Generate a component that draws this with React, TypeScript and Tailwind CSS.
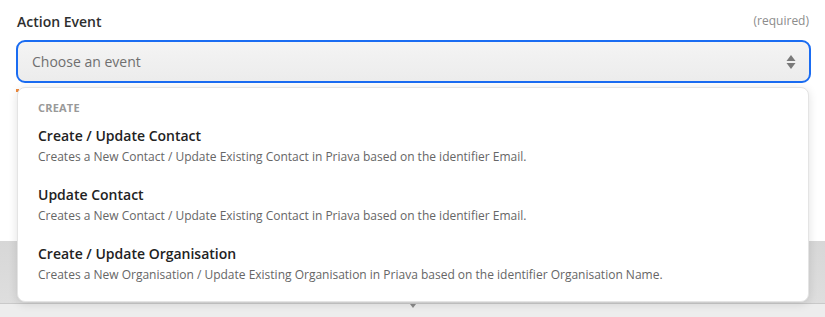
import React from "react";

const items = [
  {
    title: "Create / Update Contact",
    desc: "Creates a New Contact / Update Existing Contact in Priava based on the identifier Email.",
  },
  {
    title: "Update Contact",
    desc: "Creates a New Contact / Update Existing Contact in Priava based on the identifier Email.",
  },
  {
    title: "Create / Update Organisation",
    desc: "Creates a New Organisation / Update Existing Organisation in Priava based on the identifier Organisation Name.",
  },
];

export default function App() {
  return (
    <div
      className="relative w-[825px] h-[317px] overflow-hidden bg-white"
      style={{ fontFamily: "'Open Sans', 'Noto Sans', sans-serif" }}
    >
      <div className="h-[241px] bg-white px-[16px] pt-[9px]">
        <div className="flex items-center justify-between pl-[1px] h-[24px]">
          <span className="text-[14px] font-semibold text-[#2d2e2e]">Action Event</span>
          <span className="text-[12px] text-[#8c8c8c]">(required)</span>
        </div>
        <div className="mt-[7px] mr-[-2px] h-[43px] rounded-[9px] border-2 border-[#1a6cf2] bg-gradient-to-b from-[#f4f4f4] to-[#ececec] flex items-center justify-between pl-[14px] pr-[13px]">
          <span className="text-[14px] text-[#6f6f6f]">Choose an event</span>
          <svg width="10" height="16" viewBox="0 0 10 16">
            <path d="M5 1 L9.5 7 L0.5 7 Z" fill="#7a7a7a" />
            <path d="M5 15 L9.5 9 L0.5 9 Z" fill="#7a7a7a" />
          </svg>
        </div>
        <div className="mt-[6px] h-[3px] w-[3px] bg-[#f08a3c]" />
      </div>
      <div className="h-[63px] bg-gradient-to-b from-[#d7d7d7] to-[#dedede] border-b border-[#c9c9c9]" />
      <div className="h-[13px] bg-[#ededed] relative">
        <div className="absolute left-[410px] top-0 w-0 h-0 border-l-[3px] border-r-[3px] border-t-[4px] border-l-transparent border-r-transparent border-t-[#8a8a8a]" />
      </div>

      <div className="absolute left-[17px] top-[87px] w-[792px] h-[215px] bg-white rounded-[8px] border border-[#e4e4e4] shadow-[0_2px_10px_rgba(0,0,0,0.12)] pl-[20px] pt-[12px]">
        <div className="text-[11px] font-bold text-[#999999] tracking-[0.2px] leading-[16px]">CREATE</div>
        <div className="flex flex-col">
          {items.map((it, i) => (
            <div key={i} className="h-[59px] shrink-0 pt-[10px]">
              <div className="text-[14px] font-semibold text-[#222222] leading-[20px]">{it.title}</div>
              <div className="text-[12px] text-[#666666] leading-[17px] mt-[2px]">{it.desc}</div>
            </div>
          ))}
        </div>
      </div>
    </div>
  );
}
